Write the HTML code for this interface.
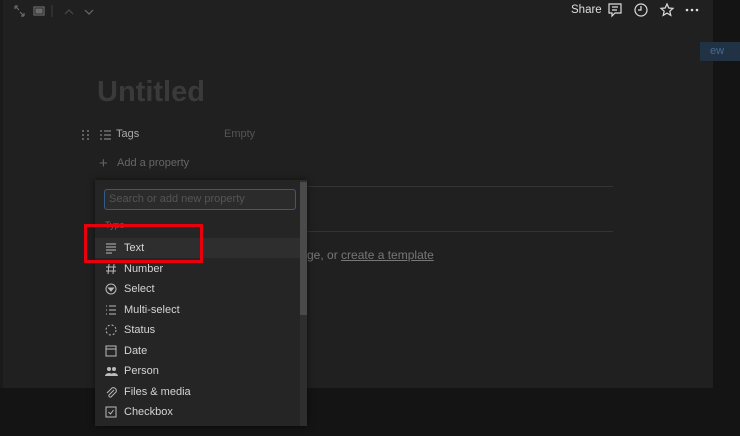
<!DOCTYPE html>
<html><head><meta charset="utf-8"><style>
body{margin:0;width:740px;height:436px;background:#141414;position:relative;overflow:hidden;font-family:"Liberation Sans",sans-serif;}
.a{position:absolute;}
.main{left:3px;top:0;width:710px;height:388px;background:#202020;}
.item{position:absolute;left:0;width:205px;height:20px;color:#d4d4d4;font-size:11px;line-height:20px;}
.item span{position:absolute;left:29px;}
.item svg{position:absolute;left:10px;top:4px;}
</style></head><body>
<div class="a" style="left:0;top:0;width:3px;height:388px;background:#1a1a1a"></div>
<div class="a main"></div>
<div class="a" style="left:700px;top:42px;width:40px;height:19px;background:#213245;color:#4a6a90;font-size:11px;line-height:19px;padding-left:10px">ew</div>
<svg class="a" style="left:12px;top:4px" width="90" height="14" viewBox="0 0 90 14" fill="none" stroke="#6a6a6a" stroke-width="1.2">
<path d="M3 2L7 6M3 2v3M3 2h3M12 12L8 8M12 12v-3M12 12h-3"/>
<rect x="22" y="3" width="10" height="8"/><rect x="24" y="5" width="6" height="4" fill="#6a6a6a"/>
<path d="M40 1v12" stroke="#3a3a3a"/>
<path d="M53 10l4-4 4 4" stroke="#4a4a4a"/><path d="M73 6l4 4 4-4"/>
</svg>
<div class="a" style="left:571px;top:4px;color:#ddd;font-size:11.5px">Share</div>
<svg class="a" style="left:607px;top:2px" width="95" height="16" viewBox="0 0 95 16" fill="none" stroke="#ddd" stroke-width="1.2">
<path d="M2 2h12v9H8l-3 3v-3H2z"/><path d="M5 5h6M5 8h5"/>
<circle cx="34" cy="8" r="6"/><path d="M34 4v4h-3"/>
<path d="M60 2l1.8 4 4.2.4-3.2 2.8 1 4.2-3.8-2.3-3.8 2.3 1-4.2-3.2-2.8 4.2-.4z"/>
<circle cx="80" cy="8" r="1.3" fill="#ddd" stroke="none"/><circle cx="85" cy="8" r="1.3" fill="#ddd" stroke="none"/><circle cx="90" cy="8" r="1.3" fill="#ddd" stroke="none"/>
</svg>
<div class="a" style="left:97px;top:76px;color:#3a3a3a;font-size:29px;font-weight:bold">Untitled</div>
<svg class="a" style="left:80px;top:128px" width="40" height="14" fill="#777"><circle cx="3" cy="3" r="1"/><circle cx="8" cy="3" r="1"/><circle cx="3" cy="7" r="1"/><circle cx="8" cy="7" r="1"/><circle cx="3" cy="11" r="1"/><circle cx="8" cy="11" r="1"/>
<g stroke="#999" stroke-width="1"><path d="M20 3h2M24 3h7M20 7h2M24 7h7M20 11h2M24 11h7"/></g></svg>
<div class="a" style="left:116px;top:128px;color:#aaa;font-size:11px">Tags</div>
<div class="a" style="left:224px;top:128px;color:#555;font-size:11px">Empty</div>
<div class="a" style="left:99px;top:155px;color:#666;font-size:15px">+</div>
<div class="a" style="left:117px;top:157px;color:#666;font-size:11px">Add a property</div>
<div class="a" style="left:100px;top:186px;width:513px;height:1px;background:#333"></div>
<div class="a" style="left:100px;top:231px;width:513px;height:1px;background:#333"></div>
<div class="a" style="left:307px;top:248px;color:#777;font-size:12px">ge, or <u>create a template</u></div>
<div class="a" style="left:95px;top:180px;width:212px;height:246px;background:#252525;box-shadow:0 0 6px rgba(0,0,0,.6)">
<div class="a" style="left:205px;top:0;width:7px;height:246px;background:#2e2e2e"></div>
<div class="a" style="left:205px;top:2px;width:7px;height:133px;background:#4a4a4a"></div>
<div class="a" style="left:9px;top:9px;width:186px;height:19px;border:1.5px solid #2f5d8a;border-radius:3px;background:#2b2b2b;color:#555;font-size:11px;line-height:19px;padding-left:4px;box-sizing:content-box">Search or add new property</div>
<div class="a" style="left:10px;top:40px;color:#666;font-size:9px">Type</div>
<div class="item" style="top:58px;background:#2e2e2e"><svg width="12" height="12" stroke="#bbb"><path d="M1 2h10M1 5h10M1 8h10M1 11h6"/></svg><span>Text</span></div>
<div class="item" style="top:79px"><svg width="12" height="12" stroke="#bbb"><path d="M4 1L3 11M9 1L8 11M1 4h10M1 8h10"/></svg><span>Number</span></div>
<div class="item" style="top:99px"><svg width="12" height="12" stroke="#bbb" fill="none"><circle cx="6" cy="6" r="5"/><path d="M3.5 5h5L6 8z" fill="#bbb"/></svg><span>Select</span></div>
<div class="item" style="top:120px"><svg width="12" height="12" stroke="#bbb"><path d="M1 2h1M4 2h7M1 6h1M4 6h7M1 10h1M4 10h7"/></svg><span>Multi-select</span></div>
<div class="item" style="top:140px"><svg width="12" height="12" stroke="#bbb" stroke-dasharray="2 2" fill="none"><circle cx="6" cy="6" r="5"/></svg><span>Status</span></div>
<div class="item" style="top:161px"><svg width="12" height="12" stroke="#bbb" fill="none"><rect x="1" y="1" width="10" height="10"/><path d="M1 4h10"/></svg><span>Date</span></div>
<div class="item" style="top:181px"><svg width="13" height="12" fill="#bbb"><circle cx="4" cy="4" r="2"/><circle cx="9" cy="4" r="2"/><path d="M0 11a4 3 0 0 1 8 0zM5 11a4 3 0 0 1 8 0z"/></svg><span>Person</span></div>
<div class="item" style="top:202px"><svg width="12" height="12" stroke="#bbb" fill="none"><path d="M9 4L4 9a1.5 1.5 0 0 0 2 2l5-5a3 3 0 0 0-4-4L2 7"/></svg><span>Files &amp; media</span></div>
<div class="item" style="top:222px"><svg width="12" height="12" stroke="#bbb" fill="none"><rect x="1" y="1" width="10" height="10"/><path d="M3.5 6l2 2 3-4"/></svg><span>Checkbox</span></div>
</div>
<div class="a" style="left:84px;top:224px;width:113px;height:33px;border:3px solid #e8000c"></div>
</body></html>
